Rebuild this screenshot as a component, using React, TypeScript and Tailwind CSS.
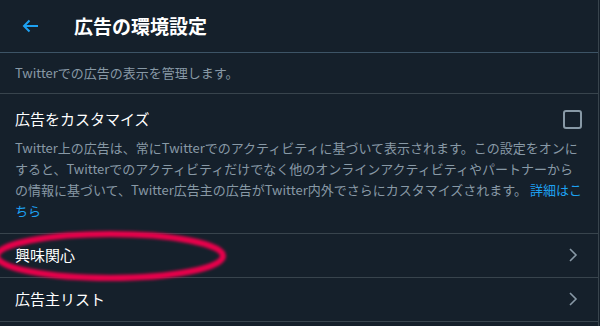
const font = { fontFamily: '"Noto Sans CJK JP", "Noto Sans", sans-serif' };

function Chevron() {
  return (
    <svg width="10" height="16" viewBox="0 0 10 16" className="text-[#8899a6]" aria-hidden>
      <path d="M2 2l6 6-6 6" fill="none" stroke="currentColor" strokeWidth="1.6" />
    </svg>
  );
}

function LinkRow({ label, ring }: { label: string; ring?: boolean }) {
  return (
    <div className="relative flex h-[44px] items-center justify-between border-b border-[#38444d] pl-[15px] pr-[20px]">
      <span className="text-[15px] text-white">{label}</span>
      <Chevron />
      {ring && (
        <svg
          className="pointer-events-none absolute left-[-10px] top-[-6px]"
          width="250"
          height="56"
          viewBox="0 0 250 56"
          aria-hidden
        >
          <defs>
            <filter id="blur" x="-10%" y="-30%" width="120%" height="160%">
              <feGaussianBlur stdDeviation="1.4" />
            </filter>
          </defs>
          <ellipse
            cx="120"
            cy="28"
            rx="113"
            ry="22"
            fill="none"
            stroke="#e8004c"
            strokeWidth="6"
            filter="url(#blur)"
          />
        </svg>
      )}
    </div>
  );
}

export default function App() {
  return (
    <div style={font} className="h-[326px] w-[600px] overflow-hidden bg-[#15202b]">
      <div className="h-full w-[599px] border-r border-[#38444d]">
        <header className="flex h-[53px] items-center border-b border-[#3d5466] pl-[22px]">
          <svg width="17" height="14" viewBox="0 0 17 14" className="text-[#1da1f2]" aria-hidden>
            <path d="M16 7H2M7.5 1.5L2 7l5.5 5.5" fill="none" stroke="currentColor" strokeWidth="2" />
          </svg>
          <h1 className="ml-[35px] text-[19px] font-bold text-white">広告の環境設定</h1>
        </header>
        <div className="flex h-[41px] items-center border-b border-[#38444d] px-[15px] text-[13px] text-[#8899a6]">
          Twitterでの広告の表示を管理します。
        </div>
        <section className="border-b border-[#38444d] px-[15px] pb-[12px] pt-[14px]">
          <div className="flex items-center justify-between">
            <span className="text-[15px] text-white">広告をカスタマイズ</span>
            <span className="mr-[1px] h-[19px] w-[19px] rounded-[3px] border-2 border-[#8899a6]" />
          </div>
          <p className="mt-[6px] text-[13px] leading-[21px] text-[#8899a6]">
            Twitter上の広告は、常にTwitterでのアクティビティに基づいて表示されます。この設定をオンにすると、Twitterでのアクティビティだけでなく他のオンラインアクティビティやパートナーからの情報に基づいて、Twitter広告主の広告がTwitter内外でさらにカスタマイズされます。
            <span className="text-[#1da1f2]"> 詳細はこちら</span>
          </p>
        </section>
        <LinkRow label="興味関心" ring />
        <LinkRow label="広告主リスト" />
      </div>
    </div>
  );
}
